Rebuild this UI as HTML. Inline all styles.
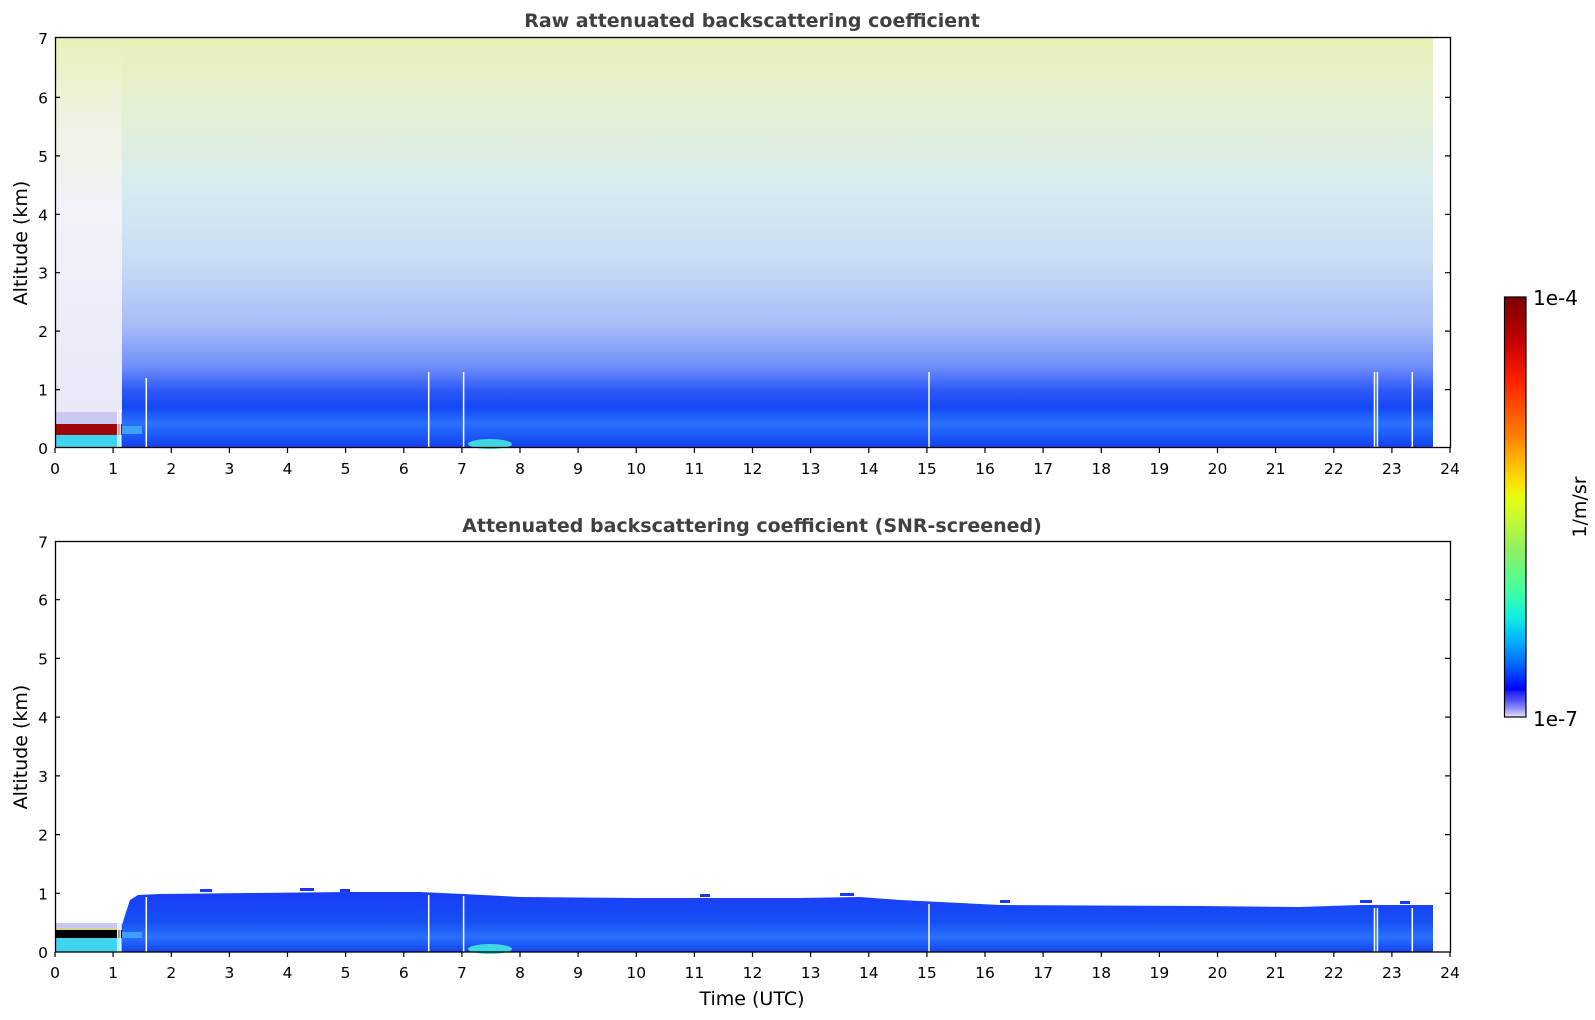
<!DOCTYPE html>
<html><head><meta charset="utf-8"><style>
html,body{margin:0;padding:0;background:#fff;width:1595px;height:1020px;overflow:hidden}
svg text{font-family:"DejaVu Sans","Liberation Sans",sans-serif}
</style></head><body>
<svg width="1595" height="1020" xmlns="http://www.w3.org/2000/svg">
<defs>
<linearGradient id="gt" x1="0" y1="0" x2="0" y2="1">
<stop offset="0" stop-color="#eaf0b8"/>
<stop offset="0.15" stop-color="#e6f0d0"/>
<stop offset="0.35" stop-color="#d8ecee"/>
<stop offset="0.55" stop-color="#c8dcf6"/>
<stop offset="0.7" stop-color="#a8bcf8"/>
<stop offset="0.8" stop-color="#7090f8"/>
<stop offset="0.86" stop-color="#2e58f8"/>
<stop offset="0.9" stop-color="#1448f4"/>
<stop offset="0.94" stop-color="#2a70ff"/>
<stop offset="1" stop-color="#1040f0"/>
</linearGradient>
<linearGradient id="gl" x1="0" y1="0" x2="0" y2="1">
<stop offset="0" stop-color="#eaf0b8"/>
<stop offset="0.2" stop-color="#eef2e0"/>
<stop offset="0.45" stop-color="#f2f2f8"/>
<stop offset="1" stop-color="#e8e8f8"/>
</linearGradient>
<linearGradient id="gb" x1="0" y1="0" x2="0" y2="1">
<stop offset="0" stop-color="#1a3cf8"/>
<stop offset="0.5" stop-color="#1650f4"/>
<stop offset="0.75" stop-color="#2a70fc"/>
<stop offset="1" stop-color="#1244f0"/>
</linearGradient>
<linearGradient id="cb" x1="0" y1="0" x2="0" y2="1">
<stop offset="0" stop-color="#7a0000"/>
<stop offset="0.1" stop-color="#c00000"/>
<stop offset="0.2" stop-color="#ff2000"/>
<stop offset="0.33" stop-color="#ff8000"/>
<stop offset="0.43" stop-color="#ffd800"/>
<stop offset="0.48" stop-color="#e8ff10"/>
<stop offset="0.6" stop-color="#90f060"/>
<stop offset="0.7" stop-color="#40ffa0"/>
<stop offset="0.76" stop-color="#10f0e0"/>
<stop offset="0.82" stop-color="#00b0ff"/>
<stop offset="0.88" stop-color="#0060ff"/>
<stop offset="0.935" stop-color="#0000ff"/>
<stop offset="0.94" stop-color="#2020f0"/>
<stop offset="0.96" stop-color="#5050f8"/>
<stop offset="0.98" stop-color="#9090f8"/>
<stop offset="1" stop-color="#e4e4fa"/>
</linearGradient>
</defs>

<!-- TOP PANEL -->
<rect x="122" y="38" width="1311" height="410" fill="url(#gt)"/>
<rect x="55" y="38" width="67" height="380" fill="url(#gl)"/>
<rect x="55" y="412" width="67" height="12" fill="#c8c8f0"/>
<rect x="55" y="424" width="67" height="11" fill="#a00808"/>
<rect x="55" y="435" width="67" height="13" fill="#40d4f0"/>
<rect x="122" y="426" width="20" height="8" fill="#40a0f8"/>
<ellipse cx="490" cy="444" rx="22" ry="5" fill="#40d8e0"/>
<g stroke="#fff" stroke-width="1.5">
<line x1="117.8" y1="410" x2="117.8" y2="448"/><line x1="120.1" y1="410" x2="120.1" y2="448"/>
<line x1="146.3" y1="378" x2="146.3" y2="448"/><line x1="428.7" y1="372" x2="428.7" y2="448"/>
<line x1="463.6" y1="372" x2="463.6" y2="448"/><line x1="929" y1="372" x2="929" y2="448"/>
<line x1="1374.5" y1="372" x2="1374.5" y2="448"/><line x1="1377.4" y1="372" x2="1377.4" y2="448"/>
<line x1="1412.3" y1="372" x2="1412.3" y2="448"/>
</g>
<rect x="55.5" y="37.5" width="1395" height="410" fill="none" stroke="#000" stroke-width="1.3"/>

<!-- BOTTOM PANEL -->
<polygon fill="url(#gb)" points="122,952 122,925 126,912 130,900 138,895 160,894 250,893 350,892 420,892 463,894 520,897 640,898 800,898 860,897 900,900 960,903 1000,905 1200,906 1300,907 1360,905 1433,905 1433,952"/>
<g fill="#1838f8">
<rect x="200" y="889" width="12" height="3"/><rect x="300" y="888" width="14" height="3"/><rect x="340" y="889" width="10" height="3"/>
<rect x="700" y="894" width="10" height="3"/><rect x="840" y="893" width="14" height="3"/><rect x="1000" y="900" width="10" height="3"/>
<rect x="1360" y="900" width="12" height="3"/><rect x="1400" y="901" width="10" height="3"/>
</g>
<rect x="55" y="923" width="67" height="6" fill="#c8c8f0"/>
<rect x="55" y="929" width="67" height="4" fill="#e0e020"/>
<rect x="55" y="930" width="67" height="8" fill="#000"/>
<rect x="55" y="938" width="67" height="14" fill="#40d4f0"/>
<rect x="122" y="932" width="20" height="6" fill="#40a0f8"/>
<ellipse cx="490" cy="949" rx="22" ry="5" fill="#40d8e0"/>
<g stroke="#fff" stroke-width="1.5">
<line x1="117.8" y1="920" x2="117.8" y2="952"/><line x1="120.1" y1="920" x2="120.1" y2="952"/>
<line x1="146.3" y1="897" x2="146.3" y2="952"/><line x1="428.7" y1="895" x2="428.7" y2="952"/>
<line x1="463.6" y1="896" x2="463.6" y2="952"/><line x1="929" y1="904" x2="929" y2="952"/>
<line x1="1374.5" y1="908" x2="1374.5" y2="952"/><line x1="1377.4" y1="908" x2="1377.4" y2="952"/>
<line x1="1412.3" y1="908" x2="1412.3" y2="952"/>
</g>
<rect x="55.5" y="541.5" width="1395" height="410.5" fill="none" stroke="#000" stroke-width="1.3"/>

<!-- ticks -->
<g stroke="#000" stroke-width="1.2">
<path d="M55,448v5M113.1,448v5M171.3,448v5M229.4,448v5M287.5,448v5M345.6,448v5M403.8,448v5M461.9,448v5M520,448v5M578.1,448v5M636.3,448v5M694.4,448v5M752.5,448v5M810.6,448v5M868.8,448v5M926.9,448v5M985,448v5M1043.1,448v5M1101.3,448v5M1159.4,448v5M1217.5,448v5M1275.6,448v5M1333.8,448v5M1391.9,448v5M1450,448v5"/>
<path d="M55,952v5M113.1,952v5M171.3,952v5M229.4,952v5M287.5,952v5M345.6,952v5M403.8,952v5M461.9,952v5M520,952v5M578.1,952v5M636.3,952v5M694.4,952v5M752.5,952v5M810.6,952v5M868.8,952v5M926.9,952v5M985,952v5M1043.1,952v5M1101.3,952v5M1159.4,952v5M1217.5,952v5M1275.6,952v5M1333.8,952v5M1391.9,952v5M1450,952v5"/>
<path d="M55,389.6h5M55,331.1h5M55,272.7h5M55,214.3h5M55,155.9h5M55,97.4h5M1450,389.6h-5M1450,331.1h-5M1450,272.7h-5M1450,214.3h-5M1450,155.9h-5M1450,97.4h-5"/>
<path d="M55,893.3h5M55,834.6h5M55,775.9h5M55,717.1h5M55,658.4h5M55,599.7h5M1450,893.3h-5M1450,834.6h-5M1450,775.9h-5M1450,717.1h-5M1450,658.4h-5M1450,599.7h-5"/>
</g>

<g font-size="15.5" fill="#000" text-anchor="middle">
<text y="474"><tspan x="55">0</tspan><tspan x="113.1">1</tspan><tspan x="171.3">2</tspan><tspan x="229.4">3</tspan><tspan x="287.5">4</tspan><tspan x="345.6">5</tspan><tspan x="403.8">6</tspan><tspan x="461.9">7</tspan><tspan x="520">8</tspan><tspan x="578.1">9</tspan><tspan x="636.3">10</tspan><tspan x="694.4">11</tspan><tspan x="752.5">12</tspan><tspan x="810.6">13</tspan><tspan x="868.8">14</tspan><tspan x="926.9">15</tspan><tspan x="985">16</tspan><tspan x="1043.1">17</tspan><tspan x="1101.3">18</tspan><tspan x="1159.4">19</tspan><tspan x="1217.5">20</tspan><tspan x="1275.6">21</tspan><tspan x="1333.8">22</tspan><tspan x="1391.9">23</tspan><tspan x="1450">24</tspan></text>
<text y="978"><tspan x="55">0</tspan><tspan x="113.1">1</tspan><tspan x="171.3">2</tspan><tspan x="229.4">3</tspan><tspan x="287.5">4</tspan><tspan x="345.6">5</tspan><tspan x="403.8">6</tspan><tspan x="461.9">7</tspan><tspan x="520">8</tspan><tspan x="578.1">9</tspan><tspan x="636.3">10</tspan><tspan x="694.4">11</tspan><tspan x="752.5">12</tspan><tspan x="810.6">13</tspan><tspan x="868.8">14</tspan><tspan x="926.9">15</tspan><tspan x="985">16</tspan><tspan x="1043.1">17</tspan><tspan x="1101.3">18</tspan><tspan x="1159.4">19</tspan><tspan x="1217.5">20</tspan><tspan x="1275.6">21</tspan><tspan x="1333.8">22</tspan><tspan x="1391.9">23</tspan><tspan x="1450">24</tspan></text>
</g>
<g font-size="15.5" fill="#000" text-anchor="end">
<text x="48" y="454">0</text><text x="48" y="395.6">1</text><text x="48" y="337.1">2</text><text x="48" y="278.7">3</text><text x="48" y="220.3">4</text><text x="48" y="161.9">5</text><text x="48" y="103.4">6</text><text x="48" y="44">7</text>
<text x="48" y="958">0</text><text x="48" y="899.3">1</text><text x="48" y="840.6">2</text><text x="48" y="781.9">3</text><text x="48" y="723.1">4</text><text x="48" y="664.4">5</text><text x="48" y="605.7">6</text><text x="48" y="547.5">7</text>
</g>

<g font-size="19" font-weight="bold" fill="#404040" text-anchor="middle">
<text x="752" y="27">Raw attenuated backscattering coefficient</text>
<text x="752" y="532">Attenuated backscattering coefficient (SNR-screened)</text>
</g>
<g font-size="19" fill="#000" text-anchor="middle">
<text x="752" y="1005">Time (UTC)</text>
<text transform="translate(27,243) rotate(-90)">Altitude (km)</text>
<text transform="translate(27,747) rotate(-90)">Altitude (km)</text>
<text transform="translate(1586,507) rotate(-90)">1/m/sr</text>
</g>

<rect x="1504.5" y="297" width="21.5" height="420" fill="url(#cb)" stroke="#000" stroke-width="1.2"/>
<g font-size="20" fill="#000">
<text x="1533" y="305">1e-4</text>
<text x="1533" y="726">1e-7</text>
</g>
</svg>
</body></html>
